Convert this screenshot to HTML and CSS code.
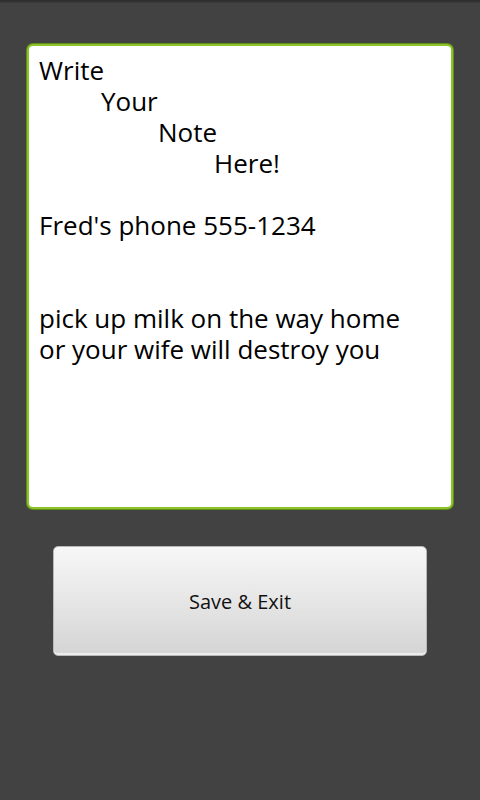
FILE: index.html
```html
<!DOCTYPE html>
<html lang="en">
<head>
    <meta charset="UTF-8">
    <meta name="viewport" content="width=device-width, initial-scale=1.0">
    <title>Note</title>
    <link rel="stylesheet" href="styles.css">
</head>
<body>
    <div class="status-edge"></div>
    <div class="screen">
        <!-- Note editor -->
        <div class="note-box">
            <div class="line">Write</div>
            <div class="line indent-1">Your</div>
            <div class="line indent-2">Note</div>
            <div class="line indent-3">Here!</div>
            <div class="line">&nbsp;</div>
            <div class="line">Fred's phone 555-1234</div>
            <div class="line">&nbsp;</div>
            <div class="line">&nbsp;</div>
            <div class="line">pick up milk on the way home</div>
            <div class="line">or your wife will destroy you</div>
        </div>

        <!-- Save button -->
        <button class="save-btn">Save &amp; Exit</button>
    </div>
</body>
</html>
```

FILE: styles.css
```css
body {
    margin: 0;
    background-color: #424242;
    font-family: "Open Sans", "Noto Sans", sans-serif;
}
.status-edge {
    height: 3px;
    background: linear-gradient(#2a2a2a, #3c3c3c);
}
.screen {
    display: flex;
    flex-direction: column;
    align-items: flex-start;
    padding: 41px 0 0 27px;
}
.note-box {
    box-sizing: border-box;
    width: 426px;
    height: 465px;
    padding: 9px 10px;
    background: #fff;
    border: 2px solid #8cc22a;
    border-radius: 6px;
    box-shadow: 0 0 0 1px #5f8f18;
    color: #000;
    font-size: 26px;
    line-height: 31px;
}
.line {
    white-space: pre;
}
.indent-1 {
    padding-left: 62px;
}
.indent-2 {
    padding-left: 119px;
}
.indent-3 {
    padding-left: 175px;
}
.save-btn {
    width: 374px;
    height: 110px;
    margin: 37px 0 0 26px;
    border: 1px solid #b8b8b8;
    border-radius: 5px;
    background: linear-gradient(#f7f7f7, #e6e6e6 50%, #d4d4d4);
    box-shadow: inset 0 -2px 0 #ececec;
    color: #111;
    font-family: "Open Sans", "Noto Sans", sans-serif;
    font-size: 20px;
}
```
